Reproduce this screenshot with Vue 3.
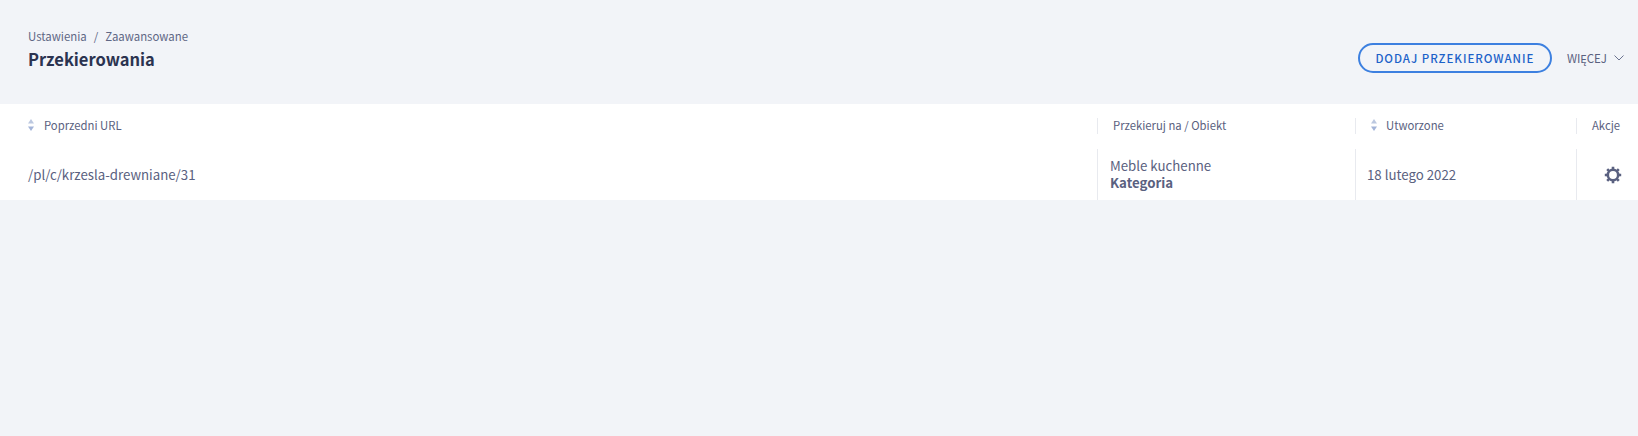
<template>
  <div class="page">
    <header class="page-header">
      <div class="titles">
        <div class="breadcrumbs">
          <a>Ustawienia</a>
          <span class="sep">/</span>
          <a>Zaawansowane</a>
        </div>
        <h1>Przekierowania</h1>
      </div>
      <div class="actions">
        <button class="btn-add">DODAJ PRZEKIEROWANIE</button>
        <button class="btn-more">
          WIĘCEJ
          <svg width="10" height="6" viewBox="0 0 10 6"><path d="M0.5 0.5L5 5L9.5 0.5" fill="none" stroke="#6b7390" stroke-width="1" /></svg>
        </button>
      </div>
    </header>

    <table class="grid">
      <colgroup>
        <col />
        <col class="col-target" />
        <col class="col-date" />
        <col class="col-actions" />
      </colgroup>
      <thead>
        <tr>
          <th class="first">
            <span class="th-inner">
              <svg class="sort" width="6" height="12" viewBox="0 0 6 12"><path d="M3 0L6 4.500H0Z" fill="#bcc8e0" /><path d="M0 7.500H6L3 12Z" fill="#a3b4d8" /></svg>
              Poprzedni URL
            </span>
          </th>
          <th class="target"><span class="th-inner divided">Przekieruj na / Obiekt</span></th>
          <th><span class="th-inner divided sortable">
            <svg class="sort" width="6" height="12" viewBox="0 0 6 12"><path d="M3 0L6 4.500H0Z" fill="#bcc8e0" /><path d="M0 7.500H6L3 12Z" fill="#a3b4d8" /></svg>
            Utworzone
          </span></th>
          <th><span class="th-inner divided akcje">Akcje</span></th>
        </tr>
      </thead>
      <tbody>
        <tr v-for="row in rows" :key="row.url">
          <td class="first">{{ row.url }}</td>
          <td class="bordered target-cell">
            <div>{{ row.target }}</div>
            <strong>{{ row.type }}</strong>
          </td>
          <td class="bordered">{{ row.created }}</td>
          <td class="bordered cog">
            <svg width="18" height="18" viewBox="0 0 18 18">
              <circle cx="9" cy="9" r="5.200" fill="none" stroke="#5a6180" stroke-width="2.600" />
              <path
                d="M9 .8V4M9 14V17.200M.8 9H4M14 9H17.200M3.200 3.200L5.400 5.400M12.600 12.600L14.800 14.800M14.800 3.200L12.600 5.400M5.400 12.600L3.200 14.800"
                fill="none"
                stroke="#5a6180"
                stroke-width="2.600"
              />
            </svg>
          </td>
        </tr>
      </tbody>
    </table>
  </div>
</template>

<script setup>
  const rows = [
    {
      url: '/pl/c/krzesla-drewniane/31',
      target: 'Meble kuchenne',
      type: 'Kategoria',
      created: '18 lutego 2022'
    }
  ]
</script>

<style>
  body {
    background: #f2f4f8;
  }
</style>

<style scoped>
  .page {
    min-height: 436px;
    background: #f2f4f8;
    font-family: "Noto Sans CJK SC", "Noto Sans", sans-serif;
    color: #5a6180;
  }

  .page-header {
    height: 104px;
    box-sizing: border-box;
    padding: 26px 14px 0 28px;
    display: flex;
    justify-content: space-between;
  }

  .breadcrumbs {
    font-size: 11.4px;
    line-height: 20px;
    color: #5f6785;
  }

  .sep {
    margin: 0 7px;
  }

  h1 {
    margin: 1px 0 0;
    font-size: 16.5px;
    line-height: 24px;
    font-weight: 600;
    color: #2b3350;
  }

  .actions {
    display: flex;
    align-items: center;
    gap: 15px;
    height: 30px;
    margin-top: 17px;
  }

  button {
    font: inherit;
    background: none;
    cursor: pointer;
  }

  .btn-add {
    width: 194px;
    height: 30px;
    padding: 0;
    border: 2px solid #3d80e0;
    border-radius: 15px;
    color: #1c62c9;
    font-size: 11.5px;
    font-weight: 500;
    letter-spacing: 0.95px;
  }

  .btn-more {
    display: flex;
    align-items: center;
    gap: 7px;
    border: 0;
    padding: 0;
    color: #5a6180;
    font-size: 11.5px;
  }

  .grid {
    width: 100%;
    table-layout: fixed;
    border-collapse: separate;
    border-spacing: 0;
    background: #fff;
    font-size: 13.25px;
  }

  .col-target {
    width: 258px;
  }

  .col-date {
    width: 221px;
  }

  .col-actions {
    width: 62px;
  }

  th {
    box-sizing: border-box;
    height: 45px;
    padding: 0 0 1px;
    text-align: left;
    font-size: 11.3px;
    font-weight: 400;
  }

  .th-inner {
    display: flex;
    align-items: center;
    gap: 9px;
    box-sizing: border-box;
    height: 16px;
    padding-bottom: 2px;
  }

  .divided {
    border-left: 1px solid #e8eaef;
    padding-left: 15px;
  }

  th.first .th-inner {
    gap: 10px;
    padding-left: 28px;
  }

  td {
    box-sizing: border-box;
    height: 51px;
    padding: 0 0 0 11px;
    line-height: 17px;
  }

  td.first {
    padding-left: 28px;
  }

  .bordered {
    border-left: 1px solid #e8eaef;
  }

  td.target-cell {
    padding: 0 0 2px 12px;
  }

  strong {
    font-weight: 700;
  }

  .cog {
    padding-left: 27px;
  }

  .cog svg {
    display: block;
  }
</style>
